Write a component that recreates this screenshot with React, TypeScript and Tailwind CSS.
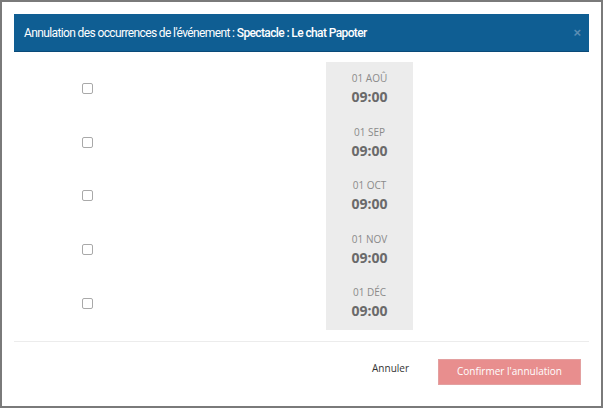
const occurrences = [
  { day: '01 AOÛ', time: '09:00' },
  { day: '01 SEP', time: '09:00' },
  { day: '01 OCT', time: '09:00' },
  { day: '01 NOV', time: '09:00' },
  { day: '01 DÉC', time: '09:00' },
];

export default function App() {
  return (
    <div className="w-[605px] h-[409px] bg-white">
      <div className="w-[603px] h-[408px] border-2 border-[#7a7a7a] bg-white px-3 pt-3 flex flex-col">
        <div className="h-[38px] bg-[#0f5e93] border-b border-[#0a4a78] flex items-center justify-between pl-[10px] pr-[8px] text-white">
          <div className="text-[12px] tracking-[-0.62px]" style={{ fontFamily: 'Roboto, "Liberation Sans", sans-serif' }}>
            Annulation des occurrences de l'événement : <span className="font-medium">Spectacle : Le chat Papoter</span>
          </div>
          <span className="text-[13px] font-bold text-[#5b8db3] leading-none" style={{ fontFamily: '"Liberation Sans", sans-serif' }}>×</span>
        </div>

        <div className="flex pt-[10px] pb-[11px] border-b border-[#ececec]" style={{ fontFamily: '"Open Sans", sans-serif' }}>
          <div className="w-[146px] flex flex-col">
            {occurrences.map((o) => (
              <div key={o.day} className="h-[53.6px] flex items-center justify-center">
                <input type="checkbox" className="w-[11px] h-[11px] m-0 appearance-none border border-[#a9a9a9] rounded-[2px] bg-white" />
              </div>
            ))}
          </div>
          <div className="w-[166px]" />
          <div className="w-[87px] bg-[#ececec] flex flex-col">
            {occurrences.map((o) => (
              <div key={o.day} className="h-[53.6px] flex flex-col items-center pt-[10px]">
                <div className="text-[10px] text-[#8a8a8a] leading-[13px]">{o.day}</div>
                <div className="text-[14px] font-bold text-[#6a6a6a] leading-[20px] mt-[2px]">{o.time}</div>
              </div>
            ))}
          </div>
        </div>

        <div className="flex items-center justify-end pt-[17px] pr-[8px]" style={{ fontFamily: '"Open Sans", sans-serif' }}>
          <button className="text-[10px] text-[#333] mr-[29px] mb-[6px]">Annuler</button>
          <button className="w-[143px] h-[26px] bg-[#e88e8e] border border-[#e3a0a0] text-white text-[10px]">
            Confirmer l'annulation
          </button>
        </div>
      </div>
    </div>
  );
}
